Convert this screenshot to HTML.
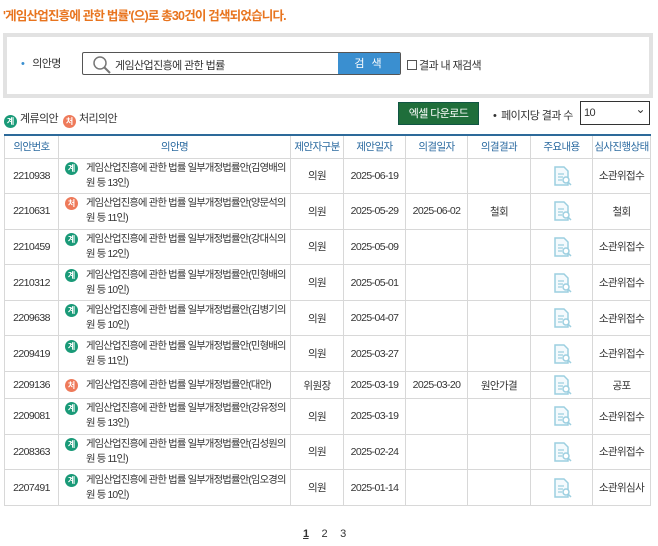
<!DOCTYPE html>
<html><head><meta charset="utf-8"><style>
*{margin:0;padding:0;box-sizing:border-box}
body{width:658px;height:546px;background:#fff;font-family:"Liberation Sans","Noto Sans CJK KR",sans-serif;font-size:11px;color:#333;position:relative;overflow:hidden;letter-spacing:-0.6px}
.title{position:absolute;left:3px;top:5px;color:#e8741e;font-weight:bold;font-size:12.5px;letter-spacing:-0.8px}
.sbox{position:absolute;left:3px;top:33px;width:650px;height:65px;border:4px solid #e2e2e2;background:#fff}
.lbl{position:absolute;left:14px;top:18px;font-size:11px}
.lbl:before{content:"•";color:#3a8fd0;margin-right:8px}
.inp{position:absolute;left:75px;top:15px;width:319px;height:23px;border:1px solid #555;border-radius:2px;background:#fff;overflow:hidden}
.inp span{position:absolute;left:32px;top:4px;font-size:11px}
.btn{position:absolute;right:0;top:0;width:62px;height:22px;background:#3a8fd0;color:#fff;text-align:center;line-height:22px;font-size:11px;letter-spacing:2px}
.chk{position:absolute;left:400px;top:20px;font-size:11px}
.chk i{display:inline-block;width:10px;height:10px;border:1px solid #555;vertical-align:-1px;margin-right:2px}
.legend{position:absolute;left:4px;top:110px;font-size:11px}
.b{display:inline-block;width:13px;height:13px;border-radius:50%;color:#fff;font-size:8px;text-align:center;line-height:13px;font-weight:bold;vertical-align:-2px;margin-right:3px;letter-spacing:0}
.g{background:#1a9a78}.r{background:#ee7a5a}
.xl{position:absolute;left:398px;top:102px;width:81px;height:23px;background:#1f6e3b;color:#fff;text-align:center;line-height:23px;font-size:11px;border:1px solid #154}
.pp{position:absolute;left:493px;top:107px;font-size:11px}
.sel{position:absolute;left:580px;top:101px;width:70px;height:24px;border:1px solid #333;font-size:11px;padding:5px 3px}
.sel:after{content:"⌄";position:absolute;right:4px;top:0px;font-size:12px}
table{position:absolute;left:4px;top:134px;width:646px;border-collapse:collapse;border-top:2px solid #2d6a9a;table-layout:fixed}
td,th{border:1px solid #d8d8d8;text-align:center;font-weight:normal;font-size:10.5px}
th{height:23px;color:#2b6aa0;background:#fff}
td{height:35.6px}
tr.s td{height:27px}
td.n{text-align:left;padding-left:6px;line-height:15px;font-size:10.3px;letter-spacing:-0.8px}
td.n .b{float:left;margin-top:1px;margin-right:8px}
td.n div{overflow:hidden}
.pg{position:absolute;top:528px;left:303px;font-size:11px}
.pg span{margin-right:13px}
svg.ic{vertical-align:middle}
</style></head><body>
<div class="title">'게임산업진흥에 관한 법률'(으)로 총30건이 검색되었습니다.</div>
<div class="sbox">
<div class="lbl">의안명</div>
<div class="inp"><svg width="22" height="22" style="position:absolute;left:8px;top:1px"><circle cx="9" cy="9" r="6" fill="none" stroke="#777" stroke-width="1.5"/><line x1="13.5" y1="13.5" x2="19" y2="19" stroke="#777" stroke-width="2"/></svg><span>게임산업진흥에 관한 법률</span><div class="btn">검 색</div></div>
<div class="chk"><i></i>결과 내 재검색</div>
</div>
<div class="legend"><span class="b g">계</span>계류의안 &nbsp;<span class="b r">처</span>처리의안</div>
<div class="xl">엑셀 다운로드</div>
<div class="pp">•&nbsp; 페이지당 결과 수</div>
<div class="sel">10</div>
<svg width="0" height="0" style="position:absolute"><defs><symbol id="d" viewBox="0 0 20 22"><path d="M3 2h9l4 4v14H3z" fill="#f4fafd" stroke="#9ccfe0" stroke-width="1.5"/><path d="M6 9h6M6 12h5M6 15h4" stroke="#9ccfe0" stroke-width="1.2"/><circle cx="14" cy="15" r="3" fill="#fff" stroke="#9ccfe0" stroke-width="1.5"/><path d="M16 17l3 3" stroke="#9ccfe0" stroke-width="1.5"/></symbol></defs></svg>
<table>
<colgroup><col style="width:54px"><col style="width:232px"><col style="width:53px"><col style="width:62px"><col style="width:62px"><col style="width:63px"><col style="width:62px"><col style="width:58px"></colgroup>
<tr><th>의안번호</th><th>의안명</th><th>제안자구분</th><th>제안일자</th><th>의결일자</th><th>의결결과</th><th>주요내용</th><th>심사진행상태</th></tr>
<tr><td>2210938</td><td class="n"><span class="b g">계</span><div>게임산업진흥에 관한 법률 일부개정법률안(김영배의원 등 13인)</div></td><td>의원</td><td>2025-06-19</td><td></td><td></td><td><svg class="ic" width="20" height="22"><use href="#d"/></svg></td><td>소관위접수</td></tr>
<tr><td>2210631</td><td class="n"><span class="b r">처</span><div>게임산업진흥에 관한 법률 일부개정법률안(양문석의원 등 11인)</div></td><td>의원</td><td>2025-05-29</td><td>2025-06-02</td><td>철회</td><td><svg class="ic" width="20" height="22"><use href="#d"/></svg></td><td>철회</td></tr>
<tr><td>2210459</td><td class="n"><span class="b g">계</span><div>게임산업진흥에 관한 법률 일부개정법률안(강대식의원 등 12인)</div></td><td>의원</td><td>2025-05-09</td><td></td><td></td><td><svg class="ic" width="20" height="22"><use href="#d"/></svg></td><td>소관위접수</td></tr>
<tr><td>2210312</td><td class="n"><span class="b g">계</span><div>게임산업진흥에 관한 법률 일부개정법률안(민형배의원 등 10인)</div></td><td>의원</td><td>2025-05-01</td><td></td><td></td><td><svg class="ic" width="20" height="22"><use href="#d"/></svg></td><td>소관위접수</td></tr>
<tr><td>2209638</td><td class="n"><span class="b g">계</span><div>게임산업진흥에 관한 법률 일부개정법률안(김병기의원 등 10인)</div></td><td>의원</td><td>2025-04-07</td><td></td><td></td><td><svg class="ic" width="20" height="22"><use href="#d"/></svg></td><td>소관위접수</td></tr>
<tr><td>2209419</td><td class="n"><span class="b g">계</span><div>게임산업진흥에 관한 법률 일부개정법률안(민형배의원 등 11인)</div></td><td>의원</td><td>2025-03-27</td><td></td><td></td><td><svg class="ic" width="20" height="22"><use href="#d"/></svg></td><td>소관위접수</td></tr>
<tr class="s"><td>2209136</td><td class="n"><span class="b r">처</span><div>게임산업진흥에 관한 법률 일부개정법률안(대안)</div></td><td>위원장</td><td>2025-03-19</td><td>2025-03-20</td><td>원안가결</td><td><svg class="ic" width="20" height="22"><use href="#d"/></svg></td><td>공포</td></tr>
<tr><td>2209081</td><td class="n"><span class="b g">계</span><div>게임산업진흥에 관한 법률 일부개정법률안(강유정의원 등 13인)</div></td><td>의원</td><td>2025-03-19</td><td></td><td></td><td><svg class="ic" width="20" height="22"><use href="#d"/></svg></td><td>소관위접수</td></tr>
<tr><td>2208363</td><td class="n"><span class="b g">계</span><div>게임산업진흥에 관한 법률 일부개정법률안(김성원의원 등 11인)</div></td><td>의원</td><td>2025-02-24</td><td></td><td></td><td><svg class="ic" width="20" height="22"><use href="#d"/></svg></td><td>소관위접수</td></tr>
<tr><td>2207491</td><td class="n"><span class="b g">계</span><div>게임산업진흥에 관한 법률 일부개정법률안(임오경의원 등 10인)</div></td><td>의원</td><td>2025-01-14</td><td></td><td></td><td><svg class="ic" width="20" height="22"><use href="#d"/></svg></td><td>소관위심사</td></tr>
</table>
<div class="pg"><span style="font-weight:bold;text-decoration:underline">1</span><span>2</span><span>3</span></div>
</body></html>
